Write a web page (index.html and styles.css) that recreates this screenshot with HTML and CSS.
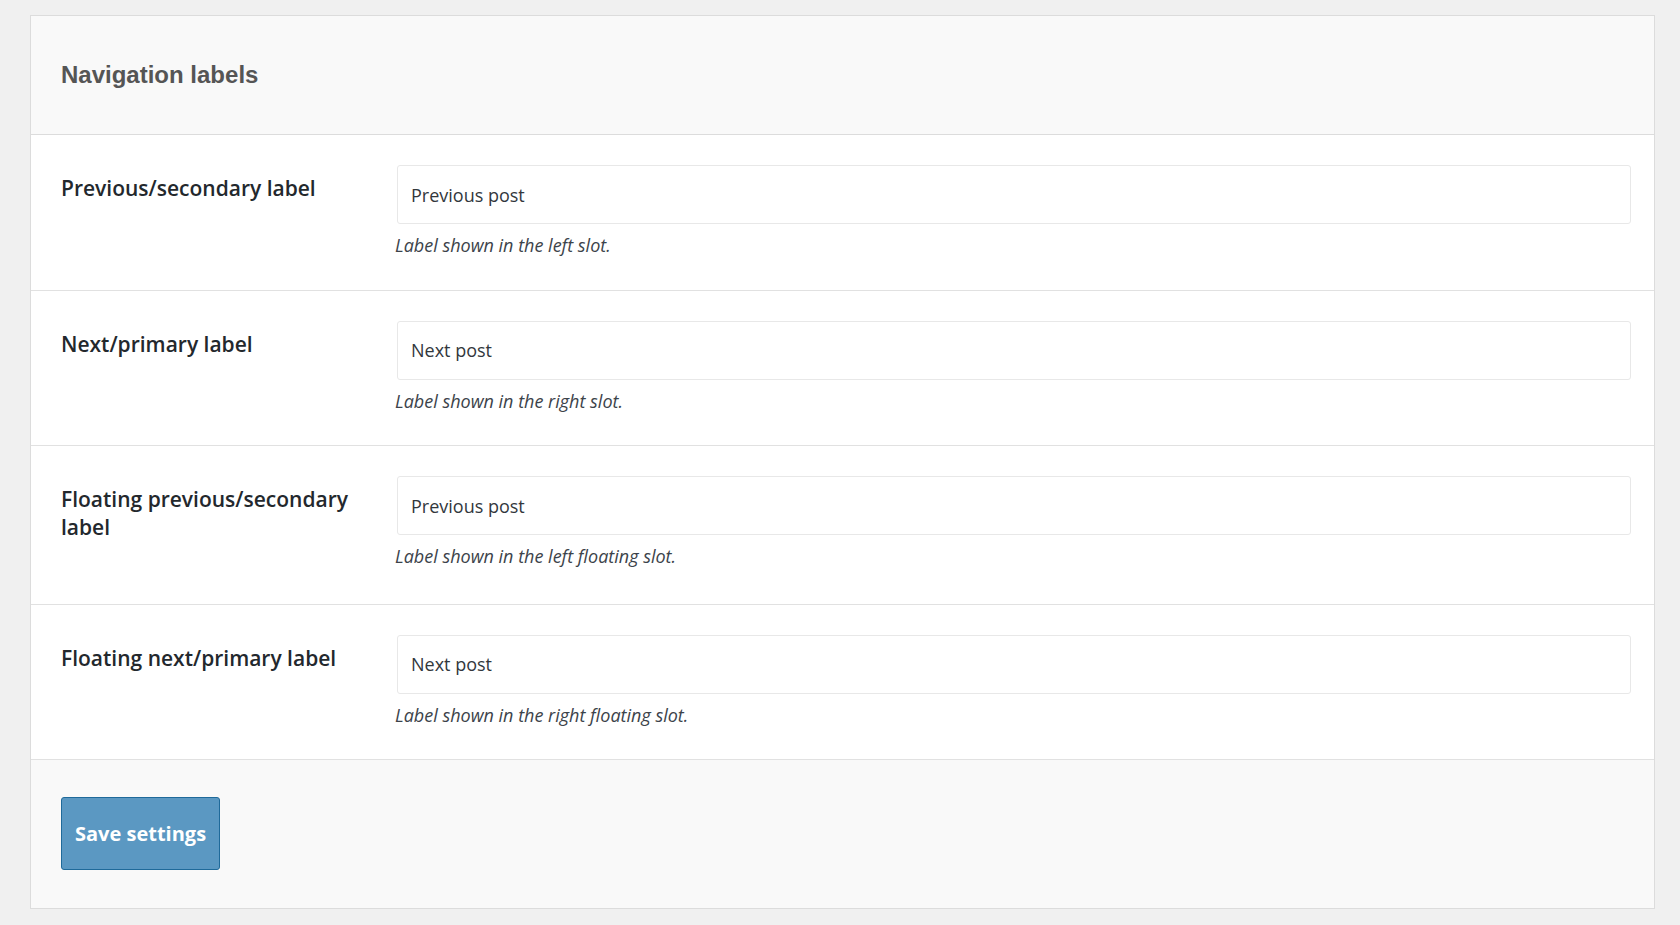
FILE: index.html
```
<!DOCTYPE html>
<html lang="en">
  <head>
    <meta charset="utf-8" />
    <title>Navigation labels</title>
    <link rel="stylesheet" href="styles.css">
  </head>
  <body>
    <form class="settings-panel">
      <div class="panel-header">
        <h2 class="panel-title">Navigation labels</h2>
      </div>

      <div class="field-row">
        <label class="field-label" for="prev-label">Previous/secondary label</label>
        <div class="field-control">
          <input id="prev-label" class="text-input" type="text" value="Previous post" />
          <p class="field-help">Label shown in the left slot.</p>
        </div>
      </div>

      <div class="field-row">
        <label class="field-label" for="next-label">Next/primary label</label>
        <div class="field-control">
          <input id="next-label" class="text-input" type="text" value="Next post" />
          <p class="field-help">Label shown in the right slot.</p>
        </div>
      </div>

      <div class="field-row field-row--wrapped">
        <label class="field-label" for="float-prev-label">Floating previous/secondary label</label>
        <div class="field-control">
          <input id="float-prev-label" class="text-input" type="text" value="Previous post" />
          <p class="field-help">Label shown in the left floating slot.</p>
        </div>
      </div>

      <div class="field-row">
        <label class="field-label" for="float-next-label">Floating next/primary label</label>
        <div class="field-control">
          <input id="float-next-label" class="text-input" type="text" value="Next post" />
          <p class="field-help">Label shown in the right floating slot.</p>
        </div>
      </div>

      <div class="panel-footer">
        <button class="save-button" type="button">Save settings</button>
      </div>
    </form>
  </body>
</html>
```

FILE: styles.css
```
/* Settings page */
html, body {
  margin: 0;
  background: #f0f0f0;
}

body {
  padding: 15px 25px 15px 30px;
  font-family: "Open Sans", "Noto Sans", sans-serif;
  color: #23282d;
}

.settings-panel {
  background: #fff;
  border: 1px solid #dcdcdc;
}

.panel-header {
  background: #f9f9f9;
  border-bottom: 1px solid #dcdcdc;
  padding: 45px 30px;
}

.panel-title {
  margin: 0;
  font-family: "Liberation Sans", Arial, sans-serif;
  font-size: 24px;
  line-height: 28px;
  font-weight: bold;
  color: #555;
}

/* One label + input row */
.field-row {
  display: flex;
  padding: 30px 23px 30.5px 30px;
  border-bottom: 1px solid #e1e1e1;
}

.field-row--wrapped {
  padding-bottom: 33.5px;
}

.field-label {
  flex: 0 0 336px;
  box-sizing: border-box;
  padding: 9px 20px 0 0;
  font-size: 21px;
  line-height: 28px;
  font-weight: 600;
  color: #23282d;
}

.field-control {
  flex: 1;
  min-width: 0;
}

.text-input {
  display: block;
  box-sizing: border-box;
  width: 100%;
  height: 59px;
  margin: 0;
  padding: 0 13px;
  border: 1px solid #e8e8e8;
  border-radius: 3px;
  background: #fff;
  font-family: "Open Sans", "Noto Sans", sans-serif;
  font-size: 18px;
  color: #32373c;
  outline: none;
}

.field-help {
  margin: 8px 0 0 -2px;
  font-size: 18px;
  line-height: 27px;
  font-style: italic;
  color: #3c434a;
}

.panel-footer {
  background: #f9f9f9;
  padding: 37px 30px 38px;
}

.save-button {
  height: 73px;
  padding: 0 13px;
  border: 1px solid #1f6a9a;
  border-radius: 3px;
  background: #5b98c2;
  color: #fff;
  font-family: "Open Sans", "Noto Sans", sans-serif;
  font-size: 20px;
  font-weight: bold;
  cursor: pointer;
}
```
